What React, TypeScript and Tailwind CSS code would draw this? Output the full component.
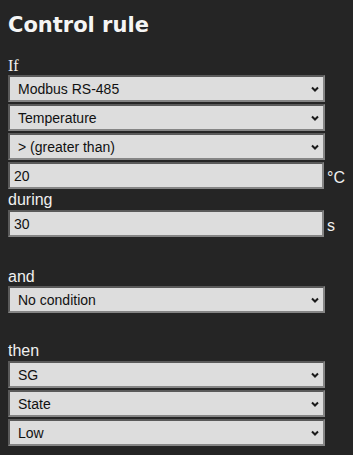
import React from "react";

const fieldBorder =
  "border-2 border-t-[#5a5a5a] border-l-[#5a5a5a] border-b-[#858585] border-r-[#858585]";

function Select({ value, className = "" }: { value: string; className?: string }) {
  return (
    <div
      className={`relative flex items-center h-[27px] w-[317px] bg-[#dddddd] ${fieldBorder} ${className}`}
    >
      <span className="pl-[8px] text-[14px] text-[#111111] font-['Liberation_Sans',Arial,sans-serif] leading-none">
        {value}
      </span>
      <svg
        className="absolute right-[4px] top-1/2 -translate-y-1/2"
        width="8"
        height="6"
        viewBox="0 0 8 6"
        fill="none"
      >
        <path d="M1 1.5 L4 4.5 L7 1.5" stroke="#1a1a1a" strokeWidth="2" />
      </svg>
    </div>
  );
}

function Input({ value, unit, className = "" }: { value: string; unit: string; className?: string }) {
  return (
    <div className={`flex items-center ${className}`}>
      <div
        className={`flex items-center h-[27px] w-[316px] bg-[#dddddd] ${fieldBorder}`}
      >
        <span className="pl-[4px] text-[14px] text-[#111111] font-['Liberation_Sans',Arial,sans-serif] leading-none">
          {value}
        </span>
      </div>
      <span className="ml-[3px] text-[16px] text-[#f0f0f0] font-['Liberation_Sans',Arial,sans-serif] leading-none mt-[4px]">
        {unit}
      </span>
    </div>
  );
}

function Label({ children, className = "" }: { children: React.ReactNode; className?: string }) {
  return (
    <div
      className={`h-[18px] leading-[18px] text-[16px] text-[#f0f0f0] font-['Liberation_Sans',Arial,sans-serif] ${className}`}
    >
      {children}
    </div>
  );
}

export default function App() {
  return (
    <div className="w-[353px] h-[455px] bg-[#252525] overflow-hidden pl-[8px]">
      <div className="flex flex-col">
        <h1 className="mt-[13px] h-[24px] leading-[24px] text-[21px] font-bold text-[#f5f5f5] font-['DejaVu_Sans',Verdana,sans-serif]">
          Control rule
        </h1>
        <div className="mt-[20px] h-[18px] leading-[18px] text-[16px] text-[#f0f0f0] font-['Liberation_Serif','Times_New_Roman',serif]">
          If
        </div>
        <Select value="Modbus RS-485" />
        <Select value="Temperature" className="mt-[2px]" />
        <Select value="> (greater than)" className="mt-[2px]" />
        <Input value="20" unit="°C" className="mt-[2px]" />
        <Label className="mt-[2px]">during</Label>
        <Input value="30" unit="s" className="mt-[1px]" />
        <Label className="mt-[31px]">and</Label>
        <Select value="No condition" />
        <Label className="mt-[29px]">then</Label>
        <Select value="SG" className="mt-[1px]" />
        <Select value="State" className="mt-[2px]" />
        <Select value="Low" className="mt-[2px]" />
      </div>
    </div>
  );
}
